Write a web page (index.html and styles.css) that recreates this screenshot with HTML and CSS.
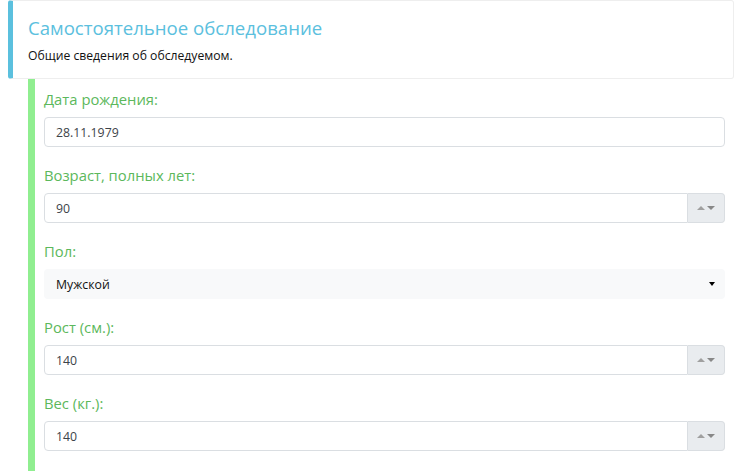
FILE: index.html
```html
<!DOCTYPE html>
<html lang="ru">
<head>
  <meta charset="UTF-8" />
  <title>Самостоятельное обследование</title>
  <link rel="stylesheet" href="styles.css">
</head>
<body>

  <div class="page">
    <div class="callout">
      <h4>Самостоятельное обследование</h4>
      <p>Общие сведения об обследуемом.</p>
    </div>

    <div class="section">
      <div class="group">
        <label for="birth">Дата рождения:</label>
        <input id="birth" class="field" type="text" value="28.11.1979">
      </div>

      <div class="group">
        <label for="age">Возраст, полных лет:</label>
        <div class="spin">
          <input id="age" class="field" type="text" value="90">
          <span class="spin-btn"><i class="up"></i><i class="down"></i></span>
        </div>
      </div>

      <div class="group">
        <label for="sex">Пол:</label>
        <div class="select">
          <span>Мужской</span>
          <i class="caret"></i>
        </div>
      </div>

      <div class="group">
        <label for="height">Рост (см.):</label>
        <div class="spin">
          <input id="height" class="field" type="text" value="140">
          <span class="spin-btn"><i class="up"></i><i class="down"></i></span>
        </div>
      </div>

      <div class="group">
        <label for="weight">Вес (кг.):</label>
        <div class="spin">
          <input id="weight" class="field" type="text" value="140">
          <span class="spin-btn"><i class="up"></i><i class="down"></i></span>
        </div>
      </div>
    </div>
  </div>

</body>
</html>
```

FILE: styles.css
```css
body {
  margin: 0;
  background: #fff;
  font-family: 'Open Sans', 'Noto Sans', sans-serif;
  color: #212529;
}

.page {
  padding: 0 12px 0 8px;
}

.callout {
  border: 1px solid #eee;
  border-left: 5px solid #5bc0de;
  border-radius: 3px;
  padding: 15px 15px 14px 15px;
  height: 48px;
}

.callout h4 {
  margin: 0 0 7px 0;
  font-weight: 400;
  font-size: 18.6px;
  line-height: 24px;
  color: #5bc0de;
}

.callout p {
  margin: 0;
  font-size: 12.2px;
  line-height: 18px;
  color: #111;
}

.section {
  margin: 0 9px 0 20px;
  border-left: 7px solid #90ee90;
  padding: 9px 0 20px 9px;
}

.group {
  margin-bottom: 17px;
}

.group label {
  display: block;
  font-size: 14.8px;
  line-height: 22px;
  margin-bottom: 7px;
  color: #5cb85c;
}

.field {
  display: block;
  box-sizing: border-box;
  width: 100%;
  height: 30px;
  margin: 0;
  padding: 4px 11px;
  font-family: inherit;
  font-size: 12.3px;
  color: #3d4349;
  background: #fff;
  border: 1px solid #dadee2;
  border-radius: 4px;
}

.spin {
  display: flex;
}

.spin .field {
  flex: 1;
  border-radius: 4px 0 0 4px;
}

.spin-btn {
  width: 37px;
  height: 30px;
  box-sizing: border-box;
  background: #e9ecef;
  border: 1px solid #dadee2;
  border-left: none;
  border-radius: 0 4px 4px 0;
  display: flex;
  align-items: center;
  justify-content: center;
  gap: 2px;
}

.spin-btn i {
  width: 0;
  height: 0;
  border-left: 4px solid transparent;
  border-right: 4px solid transparent;
}

.spin-btn .up {
  border-bottom: 4px solid #a0a0a0;
}

.spin-btn .down {
  border-top: 4px solid #888;
}

.select {
  height: 30px;
  background: #f8f9fa;
  border-radius: 4px;
  display: flex;
  align-items: center;
  justify-content: space-between;
  padding: 0 10px 0 12px;
  font-size: 12.3px;
  color: #111;
}

.caret {
  width: 0;
  height: 0;
  border-left: 3px solid transparent;
  border-right: 3px solid transparent;
  border-top: 4px solid #000;
}
```
